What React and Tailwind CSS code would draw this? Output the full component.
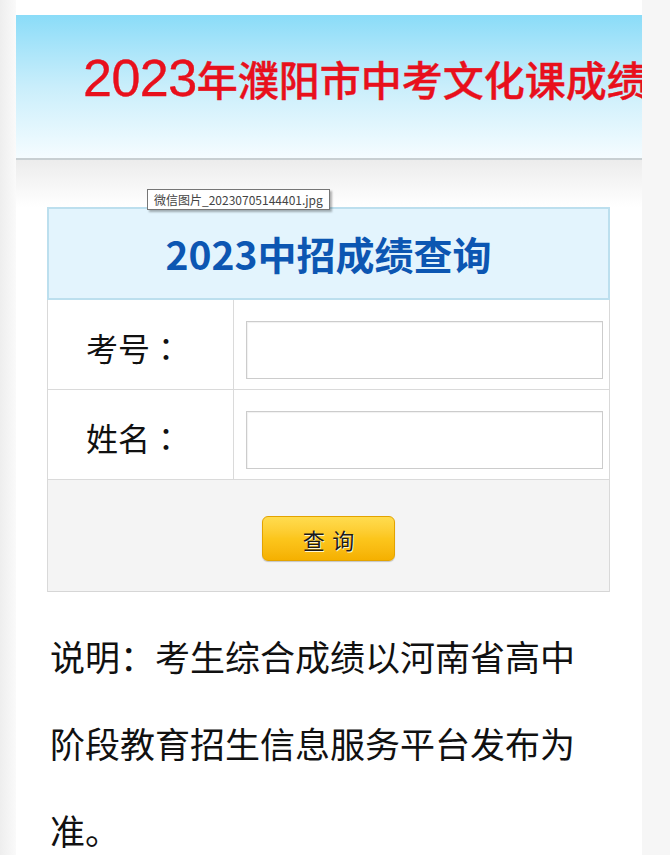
export default function App() {
  const cjk = { fontFamily: '"Noto Sans CJK SC", "Noto Sans", sans-serif' };
  return (
    <div className="flex h-[855px] overflow-hidden bg-white" style={cjk}>
      <div className="w-[16px] shrink-0 bg-gradient-to-r from-[#eeeeee] to-[#fafafa]" />
      <div className="relative w-[626px] shrink-0 bg-white pt-[15px]">
        {/* banner */}
        <div className="relative h-[143px] overflow-hidden bg-gradient-to-b from-[#8adcf8] via-[#c9eefb] to-[#f5fcff]">
          <div
            className="absolute left-[67px] top-[37px] flex items-baseline whitespace-nowrap leading-none font-medium text-[#e8101c]"
            style={{ fontFamily: '"Liberation Sans", "Noto Sans CJK SC", sans-serif', WebkitTextStroke: '0.4px #e8101c' }}
          >
            <span className="text-[52px] tracking-[-0.5px]">2023</span>
            <span className="text-[41px]">年濮阳市中考文化课成绩</span>
          </div>
        </div>
        <div className="h-[2px] bg-[#c8cfd2]" />
        <div className="h-[47px] bg-gradient-to-b from-[#ececec] to-[#ffffff]" />

        {/* tooltip */}
        <div
          className="absolute left-[131px] top-[189px] z-10 h-[21px] border border-[#767676] bg-white px-[6px] text-[12px] leading-[19px] text-[#444] shadow-[2px_2px_2px_rgba(0,0,0,0.3)] whitespace-nowrap"
          style={{ fontFamily: '"Noto Sans CJK SC", "Liberation Sans", sans-serif' }}
        >
          微信图片_20230705144401.jpg
        </div>

        {/* card */}
        <div className="ml-[31px] w-[563px]">
          <div className="flex h-[93px] items-center justify-center border-2 border-[#bcdfee] bg-[#e3f4fd]">
            <span className="text-[39px] font-bold leading-none text-[#0c56b2]">2023中招成绩查询</span>
          </div>
          <div className="border-x border-[#d9d9d9]">
            {['考号', '姓名'].map((label, i) => (
              <div key={i} className="flex h-[90px] border-b border-[#dadada]">
                <div className="flex w-[186px] items-center border-r border-[#dadada] pl-[38px] pt-[4px] text-[32px] text-[#111]">
                  {label}
                  <span style={{ fontFamily: '"Noto Sans CJK JP", "Noto Sans CJK SC", sans-serif' }}>：</span>
                </div>
                <div className="flex-1 pl-[12px] pt-[21px] pr-[6px]">
                  <div className="h-[58px] w-[357px] border border-[#cccccc] bg-white shadow-[inset_1px_1px_1px_rgba(0,0,0,0.06)]" />
                </div>
              </div>
            ))}
            <div className="flex h-[112px] justify-center border-b border-[#d6d6d6] bg-[#f4f4f4] pt-[36px]">
              <div className="flex h-[45px] w-[133px] items-center justify-center rounded-[6px] border border-[#e3a300] bg-gradient-to-b from-[#ffdc4e] via-[#fcc61c] to-[#f5b000] shadow-[0_1px_1px_rgba(0,0,0,0.2)]">
                <span
                  className="text-[22px] leading-none text-[#1a1a1a] tracking-[0.35em] pl-[0.35em]"
                  style={{ textShadow: '1px 1px 0 #fff7d0' }}
                >
                  查询
                </span>
              </div>
            </div>
          </div>
        </div>

        {/* note */}
        <p className="ml-[34px] mt-[20px] w-[545px] text-[35px] leading-[87px] text-[#111]">
          说明：考生综合成绩以河南省高中阶段教育招生信息服务平台发布为准。
        </p>
      </div>
      <div className="flex-1 bg-[#f6f6f6]" />
    </div>
  );
}
